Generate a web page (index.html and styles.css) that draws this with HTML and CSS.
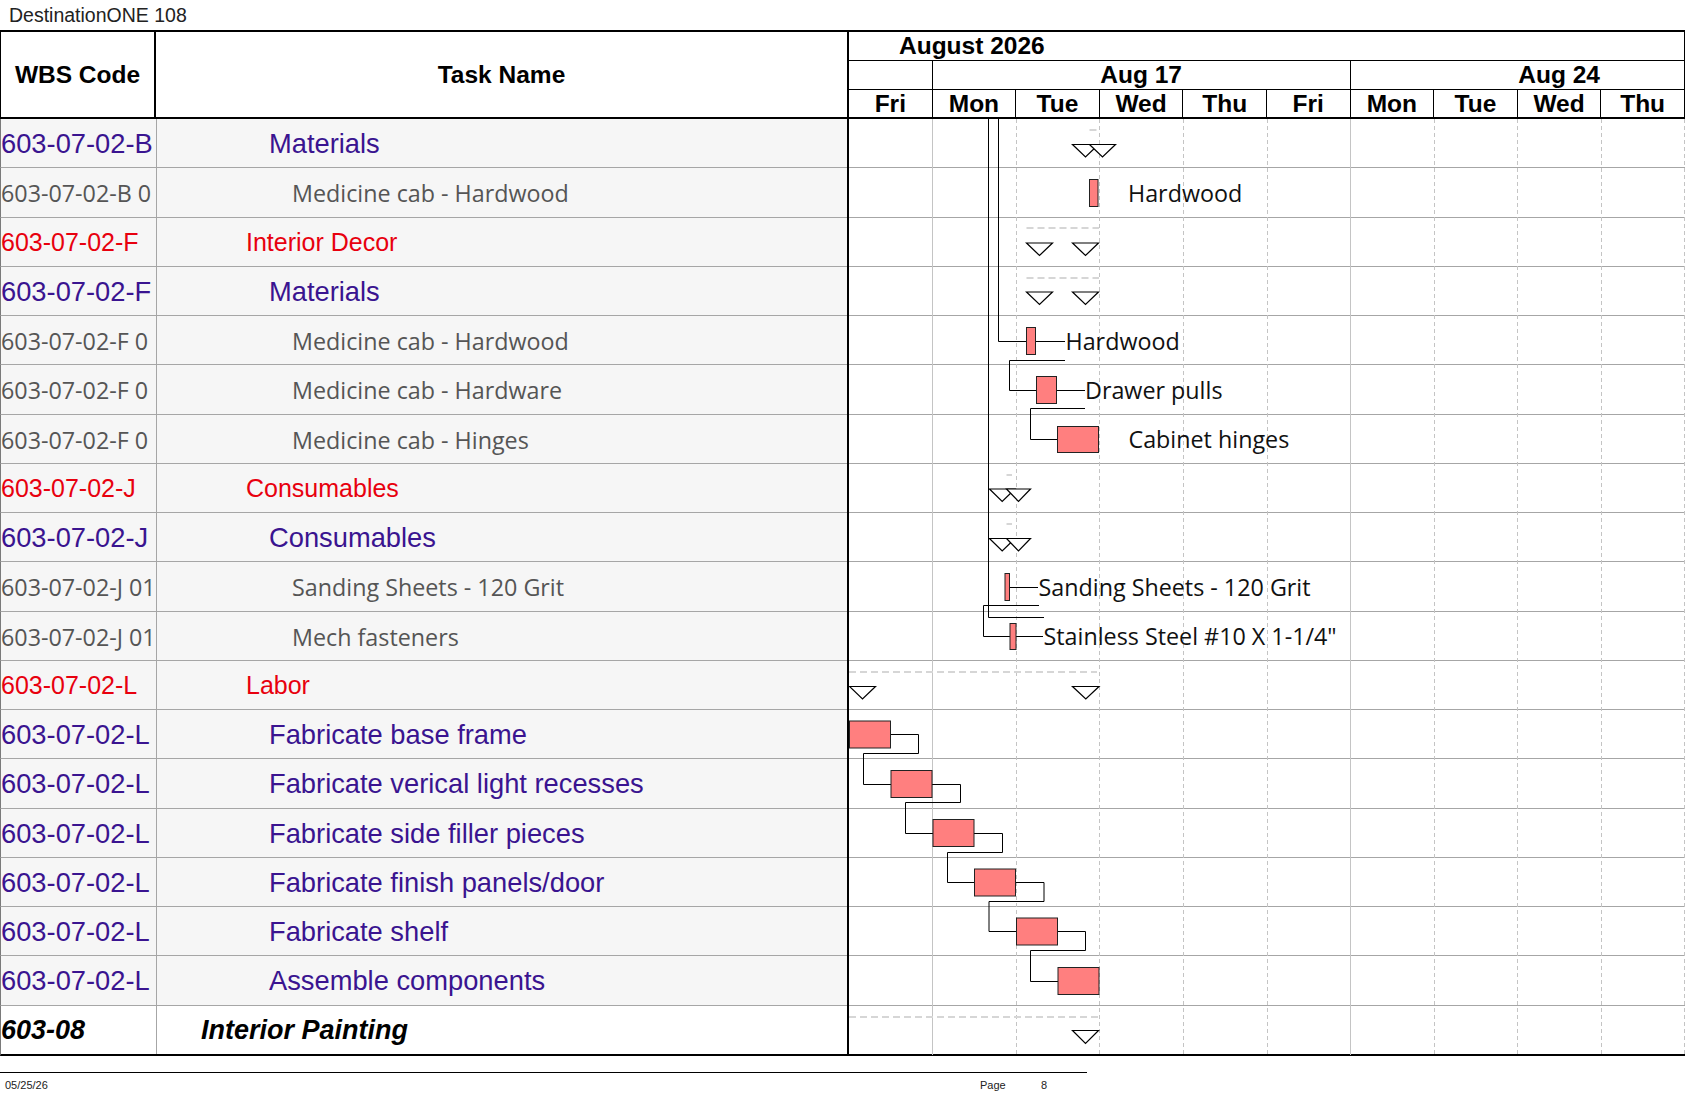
FILE: index.html
```html
<!DOCTYPE html>
<html>
<head>
<meta charset="utf-8">
<title>DestinationONE 108</title>
<link rel="stylesheet" href="styles.css">
</head>
<body>
<div class="title">DestinationONE 108</div>
<div class="sheet">
  <div class="table">
    <div class="thead">
      <div class="th th-wbs">WBS Code</div>
      <div class="th th-task">Task Name</div>
    </div>
    <div class="row"><div class="wbs purple">603-07-02-B</div><div class="task purple l2">Materials</div></div>
    <div class="row"><div class="wbs gray">603-07-02-B 0</div><div class="task gray l3">Medicine cab - Hardwood</div></div>
    <div class="row"><div class="wbs red">603-07-02-F</div><div class="task red l1">Interior Decor</div></div>
    <div class="row"><div class="wbs purple">603-07-02-F</div><div class="task purple l2">Materials</div></div>
    <div class="row"><div class="wbs gray">603-07-02-F 0</div><div class="task gray l3">Medicine cab - Hardwood</div></div>
    <div class="row"><div class="wbs gray">603-07-02-F 0</div><div class="task gray l3">Medicine cab - Hardware</div></div>
    <div class="row"><div class="wbs gray">603-07-02-F 0</div><div class="task gray l3">Medicine cab - Hinges</div></div>
    <div class="row"><div class="wbs red">603-07-02-J</div><div class="task red l1">Consumables</div></div>
    <div class="row"><div class="wbs purple">603-07-02-J 0</div><div class="task purple l2">Consumables</div></div>
    <div class="row"><div class="wbs gray">603-07-02-J 01</div><div class="task gray l3">Sanding Sheets - 120 Grit</div></div>
    <div class="row"><div class="wbs gray">603-07-02-J 01</div><div class="task gray l3">Mech fasteners</div></div>
    <div class="row"><div class="wbs red">603-07-02-L</div><div class="task red l1">Labor</div></div>
    <div class="row"><div class="wbs purple">603-07-02-L</div><div class="task purple l2">Fabricate base frame</div></div>
    <div class="row"><div class="wbs purple">603-07-02-L</div><div class="task purple l2">Fabricate verical light recesses</div></div>
    <div class="row"><div class="wbs purple">603-07-02-L</div><div class="task purple l2">Fabricate side filler pieces</div></div>
    <div class="row"><div class="wbs purple">603-07-02-L</div><div class="task purple l2">Fabricate finish panels/door</div></div>
    <div class="row"><div class="wbs purple">603-07-02-L</div><div class="task purple l2">Fabricate shelf</div></div>
    <div class="row"><div class="wbs purple">603-07-02-L</div><div class="task purple l2">Assemble components</div></div>
    <div class="row last"><div class="wbs bi">603-08</div><div class="task bi l0">Interior Painting</div></div>
  </div>
  <div class="gantt">
    <div class="ghead">
      <div class="g-month">August 2026</div>
      <div class="g-weeks">
        <div class="g-week first"></div>
        <div class="g-week">Aug 17</div>
        <div class="g-week">Aug 24</div>
      </div>
      <div class="g-days">
        <div class="g-day">Fri</div>
        <div class="g-day">Mon</div>
        <div class="g-day">Tue</div>
        <div class="g-day">Wed</div>
        <div class="g-day">Thu</div>
        <div class="g-day">Fri</div>
        <div class="g-day">Mon</div>
        <div class="g-day">Tue</div>
        <div class="g-day">Wed</div>
        <div class="g-day">Thu</div>
      </div>
    </div>
    <div class="gbody">
      <div class="grow"></div><div class="grow"></div><div class="grow"></div><div class="grow"></div>
      <div class="grow"></div><div class="grow"></div><div class="grow"></div><div class="grow"></div>
      <div class="grow"></div><div class="grow"></div><div class="grow"></div><div class="grow"></div>
      <div class="grow"></div><div class="grow"></div><div class="grow"></div><div class="grow"></div>
      <div class="grow"></div><div class="grow"></div><div class="grow last"></div>
      <svg class="chart" viewBox="0 0 836 936" xmlns="http://www.w3.org/2000/svg">
        <g class="vgrid-solid">
          <line x1="83.5" y1="0" x2="83.5" y2="936"/>
          <line x1="501.5" y1="0" x2="501.5" y2="936"/>
        </g>
        <g class="vgrid-dash">
          <line x1="167.5" y1="0" x2="167.5" y2="936"/>
          <line x1="250.5" y1="0" x2="250.5" y2="936"/>
          <line x1="334.5" y1="0" x2="334.5" y2="936"/>
          <line x1="418.5" y1="0" x2="418.5" y2="936"/>
          <line x1="585.5" y1="0" x2="585.5" y2="936"/>
          <line x1="668.5" y1="0" x2="668.5" y2="936"/>
          <line x1="752.5" y1="0" x2="752.5" y2="936"/>
          <line x1="835.5" y1="0" x2="835.5" y2="936"/>
        </g>
        <g class="sumline">
          <line x1="240.5" y1="11" x2="247.5" y2="11"/>
          <line x1="177.5" y1="109" x2="250" y2="109"/>
          <line x1="177.5" y1="159" x2="250" y2="159"/>
          <line x1="157.5" y1="356" x2="163" y2="356"/>
          <line x1="157.5" y1="405" x2="163" y2="405"/>
          <line x1="0" y1="553" x2="248" y2="553"/>
          <line x1="0" y1="898" x2="250" y2="898"/>
        </g>
        <g class="conn">
          <path d="M149.5,0 V222.5 H177.5"/>
          <path d="M139.5,0 V498.5 H195"/>
          <path d="M186.5,222.5 H216"/>
          <path d="M216,241.5 H160.5 V271.5 H187.5"/>
          <path d="M207.5,271.5 H236"/>
          <path d="M236,289.5 H181.5 V320.5 H208.5"/>
          <path d="M160.5,468.5 H189"/>
          <path d="M190,486.5 H134.5 V517.5 H161"/>
          <path d="M167,517.5 H194"/>
          <path d="M41.5,615.5 H69.5 V634.5 H14.5 V665.5 H42"/>
          <path d="M83,665.5 H111.5 V683.5 H56.5 V714.5 H84"/>
          <path d="M125,714.5 H153.5 V733.5 H98.5 V763.5 H125.5"/>
          <path d="M166.5,763.5 H195 V782.5 H140 V812.5 H167.5"/>
          <path d="M208.5,812.5 H236.5 V831.5 H181.5 V862.5 H209"/>
        </g>
        <g class="ms">
          <polygon points="223.5,25.5 249.5,25.5 236.5,38"/>
          <polygon points="240.5,25.5 266.5,25.5 253.5,38"/>
          <polygon points="177.5,124 203.5,124 190.5,136.5"/>
          <polygon points="223.5,124 249.5,124 236.5,136.5"/>
          <polygon points="177.5,173 203.5,173 190.5,185.5"/>
          <polygon points="223.5,173 249.5,173 236.5,185.5"/>
          <polygon points="140.5,370 166,370 153.2,382.5"/>
          <polygon points="157.5,370 181.5,370 169.5,382.5"/>
          <polygon points="140.5,419.5 166,419.5 153.2,432"/>
          <polygon points="157.5,419.5 181.5,419.5 169.5,432"/>
          <polygon points="0.5,567.5 26.5,567.5 13.5,580"/>
          <polygon points="223.5,567.5 250,567.5 236.8,580"/>
          <polygon points="223.5,911.5 249.5,911.5 236.5,924.5"/>
        </g>
        <g class="bar">
          <rect x="240.5" y="60.5" width="8.5" height="27"/>
          <rect x="177.5" y="208.5" width="9" height="27"/>
          <rect x="187.5" y="257.5" width="20" height="27"/>
          <rect x="208.5" y="307.5" width="41" height="26"/>
          <rect x="156" y="454.5" width="4.5" height="27"/>
          <rect x="161" y="504.5" width="6" height="26"/>
          <rect x="0.5" y="602" width="41" height="27"/>
          <rect x="42" y="651.5" width="41" height="27"/>
          <rect x="84" y="700.5" width="41" height="27"/>
          <rect x="125.5" y="750" width="41" height="27"/>
          <rect x="167.5" y="799" width="41" height="27"/>
          <rect x="209" y="848.5" width="41" height="27"/>
        </g>
        <g class="lbl">
          <text x="279" y="83">Hardwood</text>
          <text x="216.5" y="231">Hardwood</text>
          <text x="236" y="280">Drawer pulls</text>
          <text x="279.5" y="329">Cabinet hinges</text>
          <text x="189.5" y="477">Sanding Sheets - 120 Grit</text>
          <text x="194.5" y="526">Stainless Steel #10 X 1-1/4"</text>
        </g>
      </svg>
    </div>
  </div>
</div>
<div class="footer">
  <span class="f-date">05/25/26</span>
  <span class="f-page">Page</span>
  <span class="f-num">8</span>
</div>
</body>
</html>
```

FILE: styles.css
```css
html, body {
  margin: 0;
  padding: 0;
  background: #ffffff;
  overflow: hidden;
}

body {
  width: 1687px;
  height: 1097px;
  font-family: "Liberation Sans", Arial, sans-serif;
  color: #000;
}

.title {
  height: 30px;
  line-height: 30px;
  padding-left: 9px;
  font-size: 19.5px;
  color: #222;
  white-space: nowrap;
}

.sheet {
  display: flex;
  width: 1685px;
}

/* ---------- left table ---------- */
.table {
  width: 847px;
  flex: none;
}

.thead {
  display: flex;
  height: 89px;
  box-sizing: border-box;
  border-top: 2px solid #000;
  border-bottom: 2px solid #000;
  border-left: 1px solid #000;
}

.th {
  display: flex;
  align-items: center;
  justify-content: center;
  font-weight: bold;
  font-size: 24.5px;
}

.th-wbs {
  width: 155px;
  flex: none;
  box-sizing: border-box;
  border-right: 2px solid #000;
}

.th-task {
  flex: 1;
}

.row {
  display: flex;
  height: 49.26px;
  box-sizing: border-box;
  border-bottom: 1px solid #a6a6a6;
  border-left: 1px solid #7a7a7a;
  background: #f6f6f6;
}

.row.last {
  height: 50.26px;
  border-bottom: 2px solid #000;
  background: #ffffff;
}

.wbs,
.task {
  display: flex;
  align-items: center;
  padding-top: 2px;
  box-sizing: border-box;
  white-space: nowrap;
  overflow: hidden;
  font-size: 27px;
}

.wbs {
  width: 156px;
  flex: none;
  border-right: 1px solid #a6a6a6;
}

.task {
  flex: 1;
}

.purple {
  color: #3a1490;
  font-size: 27.3px;
}
.red {
  color: #e8000e;
  font-size: 25px;
}
.gray {
  color: #555555;
  font-family: "Open Sans", "Noto Sans", sans-serif;
  font-size: 23.3px;
}
.bi {
  font-weight: bold;
  font-style: italic;
  color: #000;
}

.l0 { padding-left: 44px; }
.l1 { padding-left: 89px; }
.l2 { padding-left: 112px; }
.l3 { padding-left: 135px; }

/* ---------- gantt ---------- */
.gantt {
  width: 836px;
  flex: none;
  border-left: 2px solid #000;
  overflow: hidden;
}

.ghead {
  height: 89px;
  box-sizing: border-box;
  border-top: 2px solid #000;
  border-bottom: 2px solid #000;
  border-right: 1px solid #000;
  overflow: hidden;
  font-weight: bold;
  font-size: 24.5px;
  white-space: nowrap;
}

.g-month {
  height: 29px;
  box-sizing: border-box;
  border-bottom: 1px solid #000;
  line-height: 28px;
  padding-left: 50px;
}

.g-weeks {
  display: flex;
  height: 29px;
  box-sizing: border-box;
  border-bottom: 1px solid #000;
}

.g-week {
  width: 418px;
  flex: none;
  box-sizing: border-box;
  border-right: 1px solid #000;
  text-align: center;
  line-height: 28px;
}

.g-week.first {
  width: 83.6px;
}

.g-days {
  display: flex;
  height: 27px;
}

.g-day {
  width: 83.6px;
  flex: none;
  box-sizing: border-box;
  border-right: 1px solid #000;
  text-align: center;
  line-height: 27px;
}

.gbody {
  position: relative;
}

.grow {
  height: 49.26px;
  box-sizing: border-box;
  border-bottom: 1px solid #a6a6a6;
}

.grow.last {
  height: 50.26px;
  border-bottom: 2px solid #000;
}

.chart {
  position: absolute;
  left: 0;
  top: 0;
  width: 836px;
  height: 936px;
  overflow: visible;
}

.vgrid-solid line {
  stroke: #c4c4c4;
  stroke-width: 1;
}

.vgrid-dash line {
  stroke: #c4c4c4;
  stroke-width: 1;
  stroke-dasharray: 4 3;
}

.sumline line {
  stroke: #d6d6d6;
  stroke-width: 2;
  stroke-dasharray: 7 4;
}

.conn path {
  fill: none;
  stroke: #000;
  stroke-width: 1;
}

.ms polygon {
  fill: #ffffff;
  stroke: #000;
  stroke-width: 1.2;
  stroke-linejoin: miter;
}

.bar rect {
  fill: #ff7f7f;
  stroke: #222;
  stroke-width: 1;
}

.lbl text {
  font-family: "Open Sans", "Noto Sans", sans-serif;
  font-size: 23.3px;
  fill: #111;
}

/* ---------- footer ---------- */
.footer {
  display: flex;
  margin-top: 16px;
  width: 1087px;
  border-top: 1px solid #000;
  padding-top: 6px;
  font-size: 11px;
  line-height: 13px;
  color: #222;
}

.f-date {
  margin-left: 5px;
  width: 975px;
  flex: none;
}

.f-page {
  width: 61px;
  flex: none;
}
```
